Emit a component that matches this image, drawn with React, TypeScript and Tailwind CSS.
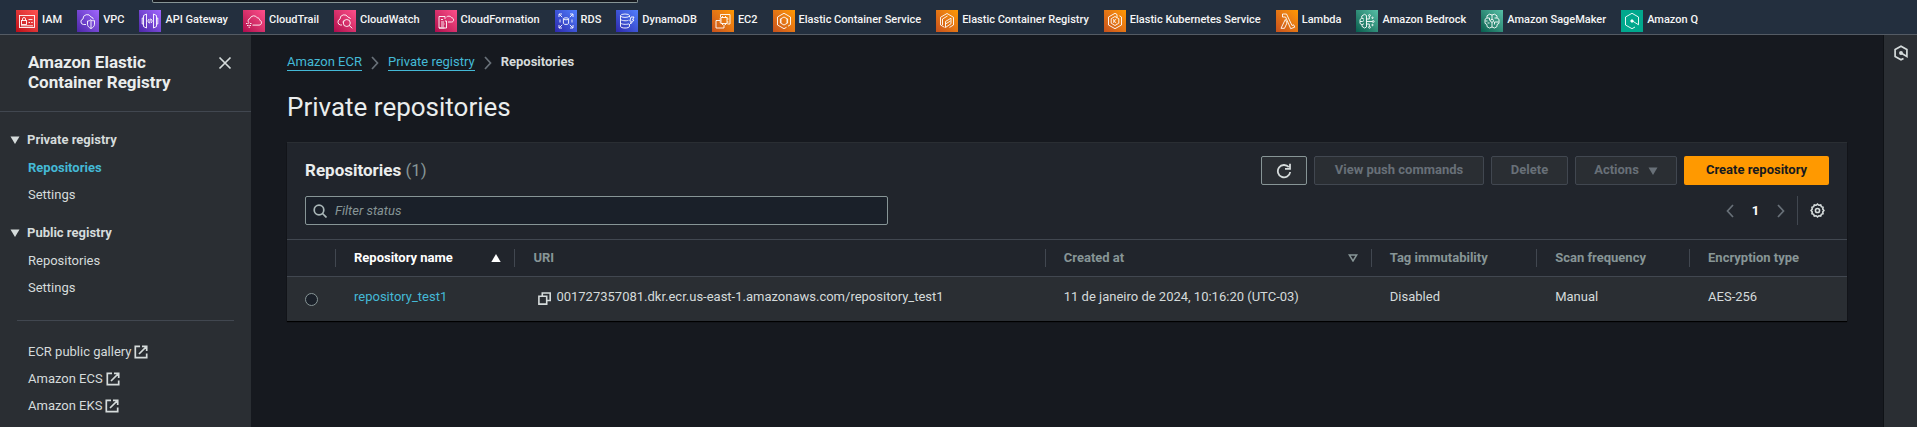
import React from 'react';

type Kind =
  | 'iam' | 'vpc' | 'api' | 'trail' | 'watch' | 'formation' | 'rds' | 'dynamo'
  | 'ec2' | 'ecs' | 'ecr' | 'eks' | 'lambda' | 'bedrock' | 'sagemaker' | 'q';

const glyphs: Record<Kind, React.ReactNode> = {
  iam: (
    <>
      <rect x="3.5" y="5.5" width="15" height="12" />
      <rect x="5.5" y="10.5" width="5" height="4" />
      <path d="M6.5 10.5V9a1.5 1.5 0 0 1 3 0v1.5M12.5 9.5h4M12.5 12.5h1.5M15.2 12.5h1.5M5 15.8h12" />
    </>
  ),
  vpc: (
    <>
      <path d="M9 14.5H6.5A2.8 2.8 0 0 1 6 9a4.2 4.2 0 0 1 8-2 2.5 2.5 0 0 1 2.3 2.3" />
      <path d="M13.5 9.8c1.400 1 2.600 1 4 .8v3.600c0 2-1.500 3.400-3.500 4.300-2-.9-3.500-2.300-3.500-4.300V11c1.400 0 2.200-.3 3-1.200zM14 10v8.500" />
    </>
  ),
  api: (
    <>
      <path d="M7.500 4v14l-3-1.500v-11zM14.500 4v14l3-1.500v-11zM4.500 8H3.200v6h1.300M17.500 8h1.300v6h-1.300" />
      <path d="M10 9l-1.200 2 1.200 2M11.400 8.600l-.8 4.800M12.200 9l1 2-1 2" />
    </>
  ),
  trail: (
    <>
      <path d="M6 12.800a2.500 2.500 0 0 1 1-4.300 4 4 0 0 1 7.300-.6c1.500-.2 2.400 1 2.300 2.200 2.600.6 2.600 5-.6 5H9.500" />
      <path d="M3 13.500h3M7 13.500h1.500M4 15.500h4M5.500 17.200h2" strokeDasharray="1.600 .8" />
    </>
  ),
  watch: (
    <>
      <path d="M8 15H6.500A3 3 0 0 1 6 9.200a4.200 4.200 0 0 1 8-2A2.600 2.600 0 0 1 16.500 9" />
      <circle cx="12.800" cy="13" r="3.500" />
      <path d="M15.300 15.500l3 2.800M9 12.500a3.500 3.500 0 0 1 1-2" />
    </>
  ),
  formation: (
    <>
      <path d="M9.500 18H4V6.500h6V9M4 18h7.500v-7H10M6 9.500h2M6 12h3M6 14h3.500M6 16h3" />
      <path d="M11.500 7a3.300 3.300 0 0 1 5 .6c2.800.5 2.800 4.400 0 4.400H13" />
    </>
  ),
  rds: (
    <>
      <path d="M4 7V4h3M4.200 4.200l3 3M15 4h3v3M17.800 4.200l-3 3M4 15v3h3M4.200 17.800l3-3M15 18h3v-3M17.800 17.800l-3-3M5 9.500v3M17 9.500v3" />
      <ellipse cx="11" cy="8.800" rx="2.600" ry="1" />
      <path d="M8.400 8.800v4.600c0 1.400 5.200 1.400 5.200 0V8.800" />
    </>
  ),
  dynamo: (
    <>
      <ellipse cx="9" cy="5.700" rx="4.500" ry="1.700" />
      <path d="M4.500 5.700v10.600c0 2.300 9 2.300 9 0V14M13.500 5.700v1.500M4.500 9c0 1.800 6 2.200 8 1.200M4.500 12.600c0 1.800 6 2.200 8.500 1.200M15 7h3l-1.500 3H18l-3.500 4 .8-3h-1.500z" />
    </>
  ),
  ec2: (
    <>
      <rect x="9" y="7.500" width="6" height="6" />
      <path d="M8.500 7V4.500H18V14h-2.500M8.500 10.500H4V18h8v-3.500M10.500 7.500V6M13.500 7.500V6M10.500 15v-1.500M13.500 15v-1.500M9 9H7.500M9 12H7.500M16.500 9H15M16.500 12H15" />
    </>
  ),
  ecs: (
    <>
      <path d="M7 5.500L11 3.300l6.500 3.700v7.700L15 16.200M4.500 7v8L11 18.700l2.500-1.400M4.500 7L7 5.500" />
      <path d="M11 7l3.600 2v4L11 15l-3.600-2V9zM14 8.600v4.700M8 8.600V13" />
    </>
  ),
  ecr: (
    <>
      <path d="M8.500 17.300L4.500 15V7.300L11 3.500l6.500 3.800V15l-4 2.400" />
      <path d="M9.500 17.500V11.500l5.500-3.300v5.500zM6.500 15v-6l5-3M9.500 14l5-3" />
    </>
  ),
  eks: (
    <>
      <path d="M13 4.500L11 3.300 4.500 7v8L11 18.700l6.500-3.700V7l-2-1.200" />
      <path d="M11 6.500L7.200 8.700v4.500L11 15.500l3.800-2.300V8.700zM9.800 9v4M12.300 9l-2.200 2 2.200 2M13 4.500v3" />
    </>
  ),
  lambda: <path d="M6.500 4h4l5.500 11.500 1.700-.7 1 2.400-4 1.500L9.600 7H6.500zM9.300 9.500L5 18.300h3.500l2.500-5.300z" />,
  bedrock: (
    <>
      <path d="M10.500 5.500v11.500l-2 1-2.500-1.600v-1.700L4 13.500v-4l1.800-1.300V6l2.700-1.700 2 1.200M6 8.200l2 1M4 11.500h2.500l1.500-1M6 14.700l2-1" />
      <path d="M10.500 9h2.800V6.500M10.500 11.500h6M10.500 14h2.800v2.500" />
      <circle cx="13.500" cy="5.500" r=".9" />
      <circle cx="17.200" cy="11.500" r=".9" />
      <circle cx="13.500" cy="17.300" r=".9" />
      <circle cx="16.500" cy="7.800" r=".7" />
      <circle cx="16.500" cy="15" r=".7" />
    </>
  ),
  sagemaker: (
    <>
      <path d="M11 5l-2.500-.8L6 5.800v2L4 9.300v4l2 1.300v2L8.500 18l2.500-1 2.500 1 2.500-1.400v-2l2-1.300v-4l-2-1.500v-2l-2.500-1.600zM11 5v4M11 12.500V17" />
      <path d="M6 8h2.500v2.500M16 8h-2.500M8.500 13H6.500M13.500 14.500V12h4M4.500 11h2" />
      <circle cx="11" cy="10.800" r="1.500" />
    </>
  ),
  q: (
    <>
      <path d="M14 17l-3 1.700L4.500 15V7L11 3.300 17.500 7v7.800l-6-3.800" />
      <circle cx="11" cy="11" r="1.200" fill="#fff" />
    </>
  ),
};

const services: { kind: Kind; label: string; tile: string }[] = [
  { kind: 'iam', label: 'IAM', tile: 'from-[#bd0816] to-[#ff5252]' },
  { kind: 'vpc', label: 'VPC', tile: 'from-[#4d27a8] to-[#a166ff]' },
  { kind: 'api', label: 'API Gateway', tile: 'from-[#4d27a8] to-[#a166ff]' },
  { kind: 'trail', label: 'CloudTrail', tile: 'from-[#b0084d] to-[#ff4f8b]' },
  { kind: 'watch', label: 'CloudWatch', tile: 'from-[#b0084d] to-[#ff4f8b]' },
  { kind: 'formation', label: 'CloudFormation', tile: 'from-[#b0084d] to-[#ff4f8b]' },
  { kind: 'rds', label: 'RDS', tile: 'from-[#2e27ad] to-[#527fff]' },
  { kind: 'dynamo', label: 'DynamoDB', tile: 'from-[#2e27ad] to-[#527fff]' },
  { kind: 'ec2', label: 'EC2', tile: 'from-[#c8511b] to-[#ff9900]' },
  { kind: 'ecs', label: 'Elastic Container Service', tile: 'from-[#c8511b] to-[#ff9900]' },
  { kind: 'ecr', label: 'Elastic Container Registry', tile: 'from-[#c8511b] to-[#ff9900]' },
  { kind: 'eks', label: 'Elastic Kubernetes Service', tile: 'from-[#c8511b] to-[#ff9900]' },
  { kind: 'lambda', label: 'Lambda', tile: 'from-[#c8511b] to-[#ff9900]' },
  { kind: 'bedrock', label: 'Amazon Bedrock', tile: 'from-[#055f4e] to-[#56c0a7]' },
  { kind: 'sagemaker', label: 'Amazon SageMaker', tile: 'from-[#055f4e] to-[#56c0a7]' },
  { kind: 'q', label: 'Amazon Q', tile: 'from-[#01a88d] to-[#01a88d]' },
];

function ServiceBar() {
  return (
    <header className="border-b border-[#545b64] bg-[#232f3e]">
      <div className="ml-[152px] h-[3px] w-[486px] rounded-b-xs border-x border-b border-[#879596] bg-[#16191f]" />
      <nav aria-label="Favorite services" className="flex gap-[15px] overflow-hidden pt-[7px] pr-4 pb-0.5 pl-4">
        {services.map((s) => (
          <a key={s.label} href="#" className="flex shrink-0 gap-1 text-[11px] font-medium leading-5 text-[#f5f5f5]">
            <span className={`block size-[22px] bg-linear-to-tr ${s.tile}`}>
              <svg viewBox="0 0 22 22" className="size-[22px]" fill="none" stroke="#fff" strokeWidth=".9">
                {glyphs[s.kind]}
              </svg>
            </span>
            {s.label}
          </a>
        ))}
      </nav>
    </header>
  );
}

function Caret({ className }: { className: string }) {
  return (
    <svg viewBox="0 0 10 8" className={className} fill="currentColor">
      <path d="M.5.5h9L5 8z" />
    </svg>
  );
}

function ExternalIcon() {
  return (
    <svg viewBox="0 0 14 14" className="size-[14px]" fill="none" stroke="currentColor" strokeWidth="1.700">
      <path d="M6 1.300H1.300v11.400h11.400V8.500M8 1.300h4.700V6M12.500 1.500L5 9" />
    </svg>
  );
}

const groups = [
  { title: 'Private registry', active: 'Repositories' },
  { title: 'Public registry', active: '' },
];

function SideNav() {
  return (
    <aside className="w-[251px] shrink-0 bg-[#2a2e33] text-[#d5dbdb]">
      <div className="flex items-start justify-between border-b border-[#414750] pt-[17px] pr-[15px] pb-[19px] pl-7">
        <h2 className="w-[160px] text-[17px] font-bold leading-5 text-[#eaeded]">Amazon Elastic Container Registry</h2>
        <button type="button" aria-label="Close navigation" className="p-1">
          <svg viewBox="0 0 14 14" className="size-[14px]" fill="none" stroke="currentColor" strokeWidth="1.700">
            <path d="M1.500 1.500l11 11M12.500 1.500l-11 11" />
          </svg>
        </button>
      </div>
      <nav aria-label="Registry" className="pt-[18px] leading-5">
        {groups.map((g) => (
          <section key={g.title} className="pb-[18px]">
            <button type="button" aria-expanded="true" className="flex items-center gap-[7px] pl-[10px] font-bold">
              <Caret className="h-2 w-[10px]" />
              {g.title}
            </button>
            <ul className="flex flex-col gap-[7px] pt-2 pl-7">
              {['Repositories', 'Settings'].map((item) => (
                <li key={item}>
                  <a href="#" className={item === g.active ? 'font-bold text-[#44b9d6]' : ''}>
                    {item}
                  </a>
                </li>
              ))}
            </ul>
          </section>
        ))}
        <hr className="mx-[17px] mt-1 border-[#414750]" />
        <ul className="flex flex-col gap-[7px] pt-[21px] pb-[11px] pl-7">
          {['ECR public gallery', 'Amazon ECS', 'Amazon EKS'].map((item) => (
            <li key={item}>
              <a href="#" className="flex items-center gap-[3px]">
                {item}
                <ExternalIcon />
              </a>
            </li>
          ))}
        </ul>
      </nav>
    </aside>
  );
}

function Chevron({ flip = false }: { flip?: boolean }) {
  return (
    <svg viewBox="0 0 8 14" className="h-[14px] w-2 text-[#687078]" fill="none" stroke="currentColor" strokeWidth="1.700">
      {flip ? <path d="M7 1L1.500 7 7 13" /> : <path d="M1 1l5.500 6L1 13" />}
    </svg>
  );
}

function Crumbs() {
  return (
    <nav aria-label="Breadcrumb" className="flex items-center gap-[9px] leading-4">
      <a href="#" className="border-b border-[#44b9d6] text-[#44b9d6]">Amazon ECR</a>
      <Chevron />
      <a href="#" className="border-b border-[#44b9d6] text-[#44b9d6]">Private registry</a>
      <Chevron />
      <span aria-current="page" className="pb-px font-bold text-[#d5dbdb]">Repositories</span>
    </nav>
  );
}

const disabled = 'flex h-[29px] items-center justify-center rounded-xs border border-[#414750] bg-[#2a2e33] pb-0.5 font-bold text-[#687078]';

function Toolbar() {
  return (
    <div className="flex flex-wrap items-center gap-[7px]">
      <button type="button" aria-label="Refresh" className="flex h-[29px] w-[46px] items-center justify-center rounded-xs border border-[#879596] bg-[#2a2e33] text-[#d5dbdb]">
        <svg viewBox="0 0 16 16" className="size-4" fill="none" stroke="currentColor" strokeWidth="1.800">
          <path d="M14.200 9A6.200 6.200 0 1 1 12.800 4.200M14 .8v5H9" />
        </svg>
      </button>
      <button type="button" disabled className={`${disabled} w-[170px]`}>View push commands</button>
      <button type="button" disabled className={`${disabled} w-[77px]`}>Delete</button>
      <button type="button" disabled className={`${disabled} w-[102px] gap-[9px]`}>
        Actions
        <Caret className="mt-0.5 h-2 w-[10px]" />
      </button>
      <button type="button" className="flex h-[29px] w-[145px] items-center justify-center rounded-xs bg-[#ff9900] pb-0.5 font-bold text-[#16191f]">
        Create repository
      </button>
    </div>
  );
}

function Pager() {
  return (
    <div className="flex items-center text-[#d5dbdb]">
      <button type="button" aria-label="Previous page"><Chevron flip /></button>
      <span className="w-[43px] text-center font-bold text-white">1</span>
      <button type="button" aria-label="Next page"><Chevron /></button>
      <span className="ml-3 h-[29px] w-px bg-[#414750]" />
      <button type="button" aria-label="Preferences" className="mr-1 ml-3">
        <svg viewBox="0 0 16 16" className="size-[15px]" fill="none" stroke="currentColor" strokeWidth="1.700">
          <path d="M8 1.200l1.500 1.200 1.900-.3.700 1.800 1.800.7-.3 1.900L14.800 8l-1.200 1.500.3 1.900-1.800.7-.7 1.800-1.900-.3L8 14.800l-1.500-1.200-1.900.3-.7-1.800-1.800-.7.3-1.900L1.200 8l1.200-1.500-.3-1.900 1.800-.7.7-1.800 1.900.3z" />
          <circle cx="8" cy="8" r="2.200" />
        </svg>
      </button>
    </div>
  );
}

const columns = [
  { label: 'Repository name', width: 'w-[11.5%]', sort: 'up' },
  { label: 'URI', width: 'w-[34%]', sort: '' },
  { label: 'Created at', width: 'w-[20.9%]', sort: 'down' },
  { label: 'Tag immutability', width: 'w-[10.6%]', sort: '' },
  { label: 'Scan frequency', width: 'w-[9.8%]', sort: '' },
  { label: 'Encryption type', width: '', sort: '' },
];

function RepositoryTable() {
  return (
    <table className="w-full table-fixed border-collapse text-left">
      <thead>
        <tr className="h-[37px] border-y border-[#414750] text-[#879596]">
          <th aria-label="Selection" className="w-12" />
          {columns.map((c) => (
            <th key={c.label} className={`p-0 ${c.width}`}>
              <div className="flex h-[18px] items-center justify-between border-l border-[#414750] pr-[13px] pl-[18px]">
                <span className={c.sort === 'up' ? 'text-white' : ''}>{c.label}</span>
                {c.sort === 'up' && (
                  <svg viewBox="0 0 10 8" className="h-2 w-[10px]" fill="#fff"><path d="M5 0l4.700 8H.3z" /></svg>
                )}
                {c.sort === 'down' && (
                  <svg viewBox="0 0 10 8" className="h-2 w-[10px]" fill="none" stroke="currentColor" strokeWidth="1.500"><path d="M1.300 1h7.400L5 7z" /></svg>
                )}
              </div>
            </th>
          ))}
        </tr>
      </thead>
      <tbody>
        <tr className="h-[44px] bg-[#2a2e33] text-[#d5dbdb]">
          <td className="pt-px pl-[18px]">
            <input type="radio" name="repository" aria-label="repository_test1" className="block size-[13px] appearance-none rounded-full border border-[#879596] bg-[#1a2029]" />
          </td>
          <td className="pb-1 pl-[19px]"><a href="#" className="text-[#44b9d6]">repository_test1</a></td>
          <td className="pb-1 pl-6">
            <div className="flex items-center gap-[5px]">
              <button type="button" aria-label="Copy URI" className="pt-[3px]">
                <svg viewBox="0 0 13 13" className="size-[13px]" fill="none" stroke="currentColor" strokeWidth="1.600">
                  <path d="M4.300 3.500V1h7.900v7.500H9.500M.9 4.300h7.800v7.800H.9z" />
                </svg>
              </button>
              001727357081.dkr.ecr.us-east-1.amazonaws.com/repository_test1
            </div>
          </td>
          <td className="pb-1 pl-[19px]">11 de janeiro de 2024, 10:16:20 (UTC-03)</td>
          <td className="pb-1 pl-[19px]">Disabled</td>
          <td className="pb-1 pl-[19px]">Manual</td>
          <td className="pb-1 pl-[19px]">AES-256</td>
        </tr>
      </tbody>
    </table>
  );
}

export default function App() {
  return (
    <div className="flex min-h-screen flex-col bg-[#16191f] font-['Roboto','Noto_Sans',sans-serif] text-[13px] leading-5">
      <ServiceBar />
      <div className="flex grow">
        <SideNav />
        <main className="min-w-0 grow px-9 pt-[19px]">
          <Crumbs />
          <h1 className="pt-[18px] text-[26px] leading-9 text-[#eaeded]">Private repositories</h1>
          <section className="mt-[17px] border-t border-[#2a2e33] bg-[#21252c] shadow-[0_1px_1px_#000]">
            <div className="flex flex-col gap-[11px] px-[18px] pt-[13px] pb-[14px]">
              <div className="flex items-center justify-between">
                <h2 className="pb-0.5 text-[17px] font-bold text-[#eaeded]">
                  Repositories <span className="font-normal text-[#879596]">(1)</span>
                </h2>
                <Toolbar />
              </div>
              <div className="flex items-center justify-between">
                <label className="flex h-[29px] w-[583px] items-center gap-2 rounded-xs border border-[#879596] bg-[#1a2029] pl-[7px] text-[#aab7b8]">
                  <svg viewBox="0 0 14 14" className="size-[14px]" fill="none" stroke="currentColor" strokeWidth="1.700">
                    <circle cx="6" cy="6" r="4.800" />
                    <path d="M9.500 9.500l4 4" />
                  </svg>
                  <input type="text" aria-label="Filter status" placeholder="Filter status" className="grow bg-transparent outline-none placeholder:text-[#879596] placeholder:italic" />
                </label>
                <Pager />
              </div>
            </div>
            <RepositoryTable />
          </section>
        </main>
        <aside className="flex w-[34px] shrink-0 justify-center border-l border-[#0f1216] bg-[#2a2e33] pt-[10px]">
          <button type="button" aria-label="Amazon Q" className="size-4 text-[#d5dbdb]">
            <svg viewBox="0 0 16 16" className="size-4" fill="none" stroke="currentColor" strokeWidth="1.700">
              <path d="M10.500 13.400L8 14.800 2.100 11.400V4.600L8 1.200l5.900 3.400v6.800L8.500 8.200" />
              <circle cx="8" cy="8" r="1.100" fill="currentColor" />
            </svg>
          </button>
        </aside>
      </div>
    </div>
  );
}
